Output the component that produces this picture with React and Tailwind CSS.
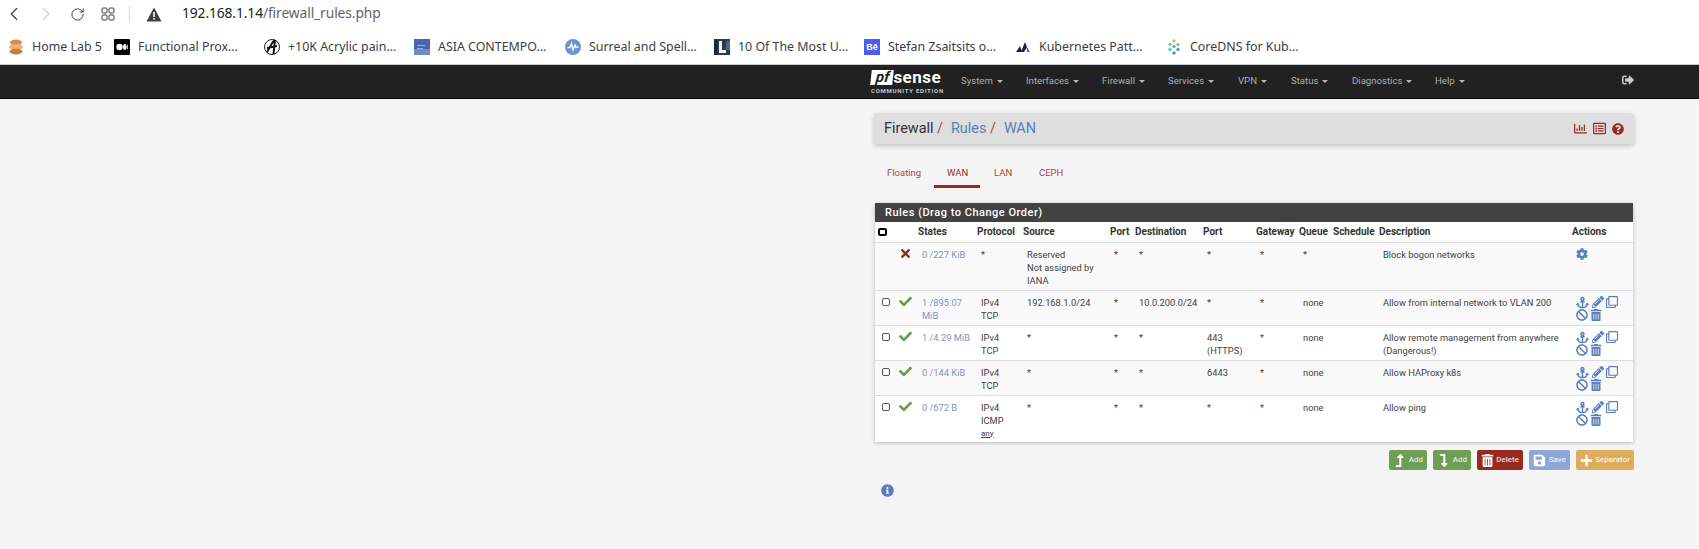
import React from 'react';
import { ChevronLeft, ChevronRight, RotateCw } from 'lucide-react';
import {
    FaAnchor, FaBan, FaCheck, FaCog, FaInfoCircle, FaLevelDownAlt, FaLevelUpAlt, FaPencilAlt, FaPlus,
    FaQuestionCircle, FaRegChartBar, FaRegClone, FaRegListAlt, FaSave, FaSignOutAlt, FaTimes, FaTrashAlt,
} from 'react-icons/fa';

const Fav1 = () => (
    <svg width="16" height="16" viewBox="0 0 16 16">
        <ellipse cx="8" cy="3.5" rx="6" ry="3" fill="#d98a45" />
        <ellipse cx="8" cy="8" rx="7" ry="3" fill="#eeb27a" />
        <ellipse cx="8" cy="12.5" rx="6.5" ry="3" fill="#cf7a35" />
    </svg>
);
const Fav2 = () => (
    <svg width="16" height="16" viewBox="0 0 16 16">
        <rect width="16" height="16" rx="1" fill="#000" />
        <circle cx="5.5" cy="8" r="3.2" fill="#fff" />
        <ellipse cx="10.7" cy="8" rx="1.6" ry="3" fill="#fff" />
        <ellipse cx="13.2" cy="8" rx=".6" ry="2.7" fill="#fff" />
    </svg>
);
const Fav3 = () => (
    <svg width="16" height="16" viewBox="0 0 16 16">
        <circle cx="8" cy="8" r="7.5" fill="#fff" stroke="#222" strokeWidth="1" />
        <path d="M11 1 C8 3 6 8 3 13 M11 1 L9.5 15 M3 9 L13 7" stroke="#111" strokeWidth="2" fill="none" />
    </svg>
);
const Fav4 = () => (
    <svg width="16" height="16" viewBox="0 0 16 16">
        <rect width="16" height="16" fill="#4a66ad" />
        <rect y="10" width="16" height="6" fill="#6f8cc9" />
        <rect x="3" y="6" width="8" height="1" fill="#9db0dc" />
        <rect x="3" y="9" width="6" height="1" fill="#9db0dc" />
    </svg>
);
const Fav5 = () => (
    <svg width="16" height="16" viewBox="0 0 16 16">
        <circle cx="8" cy="8" r="8" fill="#6b93cf" />
        <path d="M2.5 8.5 L5 8.5 L6.5 4.5 L8 11 L10 6 L11 8.5 L13.5 8" stroke="#fff" strokeWidth="1.3" fill="none" />
    </svg>
);
const Fav6 = () => (
    <svg width="16" height="16" viewBox="0 0 16 16">
        <rect width="16" height="16" fill="#2c3a47" />
        <rect x="0" width="3" height="16" fill="#1c2733" />
        <path d="M5 2 L8 2 L8 11 L12 11 L12 14 L5 14 Z" fill="#f2f2f2" />
        <rect x="12" y="2" width="4" height="9" fill="#44688a" />
    </svg>
);
const Fav7 = () => (
    <div className="w-4 h-4 bg-[#4a5ff0] text-white text-[9px] font-bold leading-4 text-center font-['Liberation_Sans',sans-serif]">Bē</div>
);
const Fav8 = () => (
    <svg width="16" height="16" viewBox="0 0 16 16">
        <path d="M1 13 L5 7 L7 13 Z M6 13 L10 3 L12 8 L9 13 Z" fill="#16204a" />
        <path d="M11 6 L15 13 L12 13 Z" fill="#5a6fb0" />
    </svg>
);
const Fav9 = () => (
    <svg width="16" height="16" viewBox="0 0 16 16">
        <rect x="6.5" y="0.5" width="3" height="3" transform="rotate(45 8 2)" fill="#b7cf5a" />
        <rect x="2.5" y="4" width="3" height="3" transform="rotate(45 4 5.5)" fill="#7fc6a4" />
        <rect x="10.5" y="4" width="3" height="3" transform="rotate(45 12 5.5)" fill="#8fc66a" />
        <rect x="6.5" y="6" width="3" height="3" transform="rotate(45 8 7.5)" fill="#58a6d8" />
        <rect x="2.5" y="9" width="3" height="3" transform="rotate(45 4 10.5)" fill="#63b3e0" />
        <rect x="10.5" y="9" width="3" height="3" transform="rotate(45 12 10.5)" fill="#3f8fd0" />
        <rect x="6.5" y="12.5" width="3" height="3" transform="rotate(45 8 14)" fill="#4a8fd6" />
    </svg>
);

const bookmarks = [
    { icon: <Fav1 />, label: 'Home Lab 5', w: 'w-[106px]' },
    { icon: <Fav2 />, label: 'Functional Prox…', w: 'w-[150px]' },
    { icon: <Fav3 />, label: '+10K Acrylic pain…', w: 'w-[150px]' },
    { icon: <Fav4 />, label: 'ASIA CONTEMPO…', w: 'w-[151px]' },
    { icon: <Fav5 />, label: 'Surreal and Spell…', w: 'w-[149px]' },
    { icon: <Fav6 />, label: '10 Of The Most U…', w: 'w-[150px]' },
    { icon: <Fav7 />, label: 'Stefan Zsaitsits o…', w: 'w-[151px]' },
    { icon: <Fav8 />, label: 'Kubernetes Patt…', w: 'w-[151px]' },
    { icon: <Fav9 />, label: 'CoreDNS for Kub…', w: 'w-[150px]' },
];

const menu = [
    { label: 'System', w: 'w-[65px]' },
    { label: 'Interfaces', w: 'w-[76px]' },
    { label: 'Firewall', w: 'w-[66px]' },
    { label: 'Services', w: 'w-[70px]' },
    { label: 'VPN', w: 'w-[53px]' },
    { label: 'Status', w: 'w-[61px]' },
    { label: 'Diagnostics', w: 'w-[83px]' },
    { label: 'Help', w: 'w-[60px]' },
];

const columns = [
    { label: '', w: 'w-[18px]' },
    { label: '', w: 'w-[22px]' },
    { label: 'States', w: 'w-[59px]' },
    { label: 'Protocol', w: 'w-[46px]' },
    { label: 'Source', w: 'w-[87px]' },
    { label: 'Port', w: 'w-[25px]' },
    { label: 'Destination', w: 'w-[68px]' },
    { label: 'Port', w: 'w-[53px]' },
    { label: 'Gateway', w: 'w-[43px]' },
    { label: 'Queue', w: 'w-[34px]' },
    { label: 'Schedule', w: 'w-[46px]' },
    { label: 'Description', w: 'w-[193px]' },
    { label: 'Actions', w: 'w-[64px]' },
];

const rules = [
    { pass: false, fixed: true, bg: 'bg-[#f9f9f9]', h: 'h-[48px]', states: '0 /227 KiB', proto: ['*'], source: ['Reserved', 'Not assigned by', 'IANA'], sport: '*', dest: '*', port: ['*'], gw: '*', queue: '*', desc: ['Block bogon networks'] },
    { pass: true, bg: 'bg-[#f9f9f9]', h: 'h-[35px]', states: '1 /895.07 MiB', proto: ['IPv4', 'TCP'], source: ['192.168.1.0/24'], sport: '*', dest: '10.0.200.0/24', port: ['*'], gw: '*', queue: 'none', desc: ['Allow from internal network to VLAN 200'] },
    { pass: true, bg: 'bg-white', h: 'h-[35px]', states: '1 /4.29 MiB', proto: ['IPv4', 'TCP'], source: ['*'], sport: '*', dest: '*', port: ['443', '(HTTPS)'], gw: '*', queue: 'none', desc: ['Allow remote management from anywhere', '(Dangerous!)'] },
    { pass: true, bg: 'bg-[#f9f9f9]', h: 'h-[35px]', states: '0 /144 KiB', proto: ['IPv4', 'TCP'], source: ['*'], sport: '*', dest: '*', port: ['6443'], gw: '*', queue: 'none', desc: ['Allow HAProxy k8s'] },
    { pass: true, bg: 'bg-white', h: 'h-[47px]', states: '0 /672 B', proto: ['IPv4', 'ICMP'], any: true, source: ['*'], sport: '*', dest: '*', port: ['*'], gw: '*', queue: 'none', desc: ['Allow ping'] },
];

const Cell = ({ children, className = '' }) => (
    <td className={`align-top pt-[5px] pl-[7px] pr-0 leading-[13px] ${className}`}>{children}</td>
);

const Lines = ({ items }) => items.map((t) => <div key={t}>{t}</div>);

const ActionIcons = () => (
    <div className="flex flex-wrap w-[48px] text-[#5b7dbd]">
        <FaAnchor size={13} className="mr-[3px]" />
        <FaPencilAlt size={12} className="mr-[2px]" />
        <FaRegClone size={12} />
        <div className="w-full flex">
            <FaBan size={12} className="mr-[2px]" />
            <FaTrashAlt size={12} />
        </div>
    </div>
);

const ActionBtn = ({ icon, label, bg, w }) => (
    <button className={`${bg} ${w} h-[20px] flex items-center justify-between px-[4px] rounded-[2px] text-white text-[8px] font-medium`}>
        {icon}
        <span className="opacity-80">{label}</span>
    </button>
);

export default function App() {
    return (
        <div className="h-[549px] overflow-hidden bg-[#f5f5f5] font-['Roboto',sans-serif]">
            {/* browser chrome */}
            <div className="h-[32px] pb-[4px] bg-white flex items-center font-['Noto_Sans',sans-serif]">
                <ChevronLeft size={22} strokeWidth={1.3} className="ml-[3px] text-[#3c4043]" />
                <ChevronRight size={22} strokeWidth={1.1} className="ml-[10px] text-[#b5b8bb]" />
                <RotateCw size={15} strokeWidth={1.6} className="ml-[13px] text-[#3c4043]" />
                <svg width="14" height="14" viewBox="0 0 14 14" className="ml-[16px]" fill="none" stroke="#3c4043">
                    <rect x="1" y="1" width="5" height="5" rx="1" />
                    <rect x="8" y="1" width="5" height="5" rx="1" />
                    <rect x="1" y="8" width="5" height="5" rx="1" />
                    <rect x="8" y="8" width="5" height="5" rx="1" />
                </svg>
                <div className="ml-[14px] w-px h-[16px] bg-[#d5d7da]" />
                <svg width="16" height="15" viewBox="0 0 16 15" className="ml-[16px]">
                    <path d="M8 0.5 L15.5 14.5 L0.5 14.5 Z" fill="#3c4043" />
                    <rect x="7.2" y="5" width="1.6" height="5" fill="#fff" />
                    <rect x="7.2" y="11" width="1.6" height="1.6" fill="#fff" />
                </svg>
                <div className="ml-[20px] -mt-[1px] text-[13.8px] tracking-[-0.1px] text-[#5f6368]">
                    <span className="text-[#202124]">192.168.1.14</span>/firewall_rules.php
                </div>
            </div>
            <div className="h-[32px] pb-[2px] bg-white flex items-center pl-[8px] text-[12.4px] text-[#3c4043] font-['Noto_Sans',sans-serif]">
                {bookmarks.map((b) => (
                    <div key={b.label} className={`${b.w} flex items-center gap-[8px] shrink-0 whitespace-nowrap`}>
                        {b.icon}
                        <span>{b.label}</span>
                    </div>
                ))}
            </div>

            {/* navbar */}
            <div className="h-[35px] bg-[#212121] border-t border-t-[#c4c8cc] border-b border-b-black flex items-center pl-[871px]">
                <div className="w-[90px] shrink-0 text-white leading-none">
                    <div className="flex items-center h-[15px]">
                        <span className="bg-white text-[#212121] italic font-bold text-[15px] leading-[15px] pl-[5px] pr-[4px] -skew-x-6">pf</span>
                        <span className="font-bold text-[17px] leading-[15px] tracking-[0.5px]">sense</span>
                    </div>
                    <div className="text-[6px] font-bold tracking-[0.75px] mt-[3px] text-[#c8c8c8] whitespace-nowrap">COMMUNITY EDITION</div>
                </div>
                {menu.map((m) => (
                    <div key={m.label} className={`${m.w} shrink-0 flex items-center text-[9.6px] text-[#a9b0b5]`}>
                        {m.label}
                        <span className="ml-[4px] w-0 h-0 border-x-[3px] border-x-transparent border-t-[3px] border-t-[#b9b9b9]" />
                    </div>
                ))}
                <FaSignOutAlt size={12} className="ml-[127px] -mt-[4px] text-[#c8cdd2]" />
            </div>

            {/* page */}
            <div className="ml-[874px] w-[760px]">
                <div className="mt-[14px] h-[31px] bg-[#dedede] rounded-[3px] shadow-[0_2px_5px_rgba(0,0,0,0.22)] flex items-center justify-between pl-[10px] pr-[10px]">
                    <div className="text-[14.4px] text-[#333]">
                        Firewall <span className="text-[#a0522d]">/</span>
                        <span className="text-[#5b7dbd] ml-[8px]">Rules</span> <span className="text-[#a0522d]">/</span>
                        <span className="text-[#5b7dbd] ml-[8px]">WAN</span>
                    </div>
                    <div className="flex items-center gap-[6px] text-[#98291f]">
                        <FaRegChartBar size={13} />
                        <FaRegListAlt size={13} />
                        <FaQuestionCircle size={12} />
                    </div>
                </div>

                <div className="mt-[20px] flex h-[24px] text-[9.5px] text-[#a8453a] ml-[1px]">
                    <div className="w-[59px] pl-[12px] pt-[2px]">Floating</div>
                    <div className="w-[46px] pl-[13px] pt-[2px] border-b-[3px] border-b-[#98291f] text-[#98291f]">WAN</div>
                    <div className="w-[59px] pl-[14px] pt-[2px]">LAN</div>
                    <div className="pt-[2px]">CEPH</div>
                </div>

                {/* rules panel */}
                <div className="mt-[15px] ml-[1px] w-[758px] bg-white shadow-[0_1px_4px_rgba(0,0,0,0.25)]">
                    <div className="h-[19px] bg-[#424242] text-white text-[11px] font-medium tracking-[0.5px] leading-[19px] pl-[10px]">
                        Rules (Drag to Change Order)
                    </div>
                    <table className="w-[758px] table-fixed text-[9.3px] text-[#424242] border-collapse">
                        <thead>
                            <tr className="h-[20px]">
                                {columns.map((c, i) => (
                                    <th key={i} className={`${c.w} text-left text-[10px] font-bold text-[#333] pl-[3px] pr-0 whitespace-nowrap`}>
                                        {i === 0 ? <div className="w-[9px] h-[8px] rounded-[2px] border-2 border-black bg-white" /> : c.label}
                                    </th>
                                ))}
                            </tr>
                        </thead>
                        <tbody>
                            {rules.map((r) => (
                                <tr key={r.states} className={`${r.bg} ${r.h} border-t border-t-[#dddddd]`}>
                                    <td className="align-top pt-[7px] pl-[7px] pr-0">
                                        {!r.fixed && <div className="w-[8px] h-[8px] rounded-[2px] border border-[#555] bg-white" />}
                                    </td>
                                    <td className="align-top pt-[4px] pl-[6px] pr-0">
                                        {r.pass ? <FaCheck size={13} className="text-[#6a9c50]" /> : <FaTimes size={13} className="text-[#98291f]" />}
                                    </td>
                                    <Cell className="text-[#7f92c4]">{r.states}</Cell>
                                    <Cell>
                                        <Lines items={r.proto} />
                                        {r.any && <div className="underline text-[8px]">any</div>}
                                    </Cell>
                                    <Cell><Lines items={r.source} /></Cell>
                                    <Cell>{r.sport}</Cell>
                                    <Cell>{r.dest}</Cell>
                                    <Cell><Lines items={r.port} /></Cell>
                                    <Cell>{r.gw}</Cell>
                                    <Cell>{r.queue}</Cell>
                                    <Cell />
                                    <Cell><Lines items={r.desc} /></Cell>
                                    <Cell>
                                        {r.fixed ? <FaCog size={12} className="text-[#5b7dbd]" /> : <ActionIcons />}
                                    </Cell>
                                </tr>
                            ))}
                        </tbody>
                    </table>
                </div>

                {/* bottom buttons */}
                <div className="mt-[8px] flex justify-end gap-[6px]">
                    <ActionBtn icon={<FaLevelUpAlt size={13} />} label="Add" bg="bg-[#6d9e54]" w="w-[38px]" />
                    <ActionBtn icon={<FaLevelDownAlt size={13} />} label="Add" bg="bg-[#6d9e54]" w="w-[38px]" />
                    <ActionBtn icon={<FaTrashAlt size={13} />} label="Delete" bg="bg-[#98291f]" w="w-[46px]" />
                    <ActionBtn icon={<FaSave size={13} />} label="Save" bg="bg-[#8fa6d8]" w="w-[41px]" />
                    <ActionBtn icon={<FaPlus size={13} />} label="Separator" bg="bg-[#dcae5b]" w="w-[58px]" />
                </div>
                <FaInfoCircle size={13} className="mt-[14px] ml-[7px] text-[#5b7dbd]" />
            </div>
        </div>
    );
}
